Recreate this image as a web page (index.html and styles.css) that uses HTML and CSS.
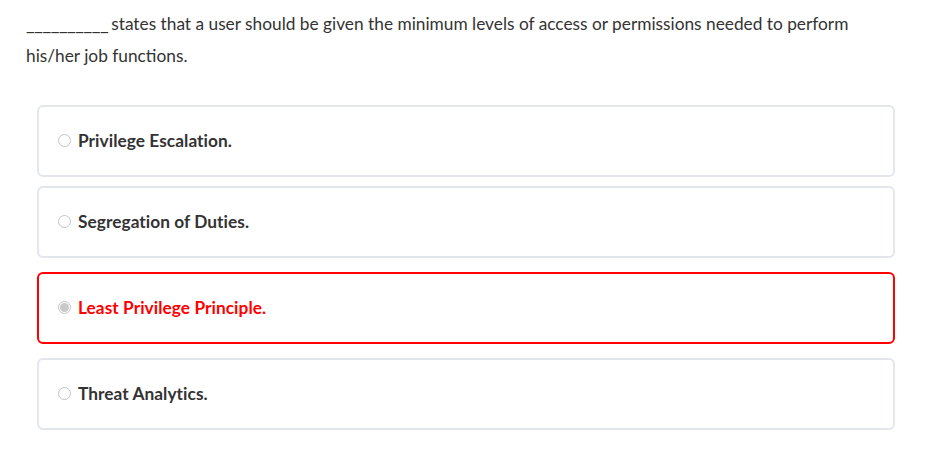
FILE: index.html
```html
<!DOCTYPE html>
<html>
<head>
<meta charset="utf-8">
<link rel="stylesheet" href="styles.css">
</head>
<body>
<div class="question">
  <p class="stem"><span class="blank">__________</span>states that a user should be given the minimum levels of access or permissions needed to perform his/her job functions.</p>
  <div class="options">
    <div class="option opt1"><span class="radio"></span><span class="label">Privilege Escalation.</span></div>
    <div class="option opt2"><span class="radio"></span><span class="label">Segregation of Duties.</span></div>
    <div class="option opt3 selected"><span class="radio checked"></span><span class="label">Least Privilege Principle.</span></div>
    <div class="option opt4"><span class="radio"></span><span class="label">Threat Analytics.</span></div>
  </div>
</div>
</body>
</html>
```
FILE: styles.css
```css
html, body {
  margin: 0;
  padding: 0;
  background: #fff;
}
body {
  padding: 8px 0 0 26px;
  font-family: Lato, "Open Sans", sans-serif;
  color: #333;
}
.question {
  width: 868px;
}
.stem {
  margin: 0;
  font-size: 17.3px;
  line-height: 32px;
  color: #333;
}
.blank {
  font-size: 19px;
  line-height: 1;
  letter-spacing: -0.5px;
  margin-right: 3px;
}
.options {
  display: flex;
  flex-direction: column;
  margin: 33px 0 0 11px;
  width: 858px;
}
.option {
  box-sizing: border-box;
  height: 72px;
  border: 2px solid #e3e6ea;
  border-radius: 6px;
  display: flex;
  align-items: center;
  padding-left: 19px;
  padding-bottom: 2px;
}
.opt2 { margin-top: 9px; }
.opt3 { margin-top: 14px; }
.opt4 { margin-top: 14px; }
.option.selected {
  border-color: #f00;
}
.radio {
  box-sizing: border-box;
  width: 13px;
  height: 13px;
  border: 1px solid #c4c4c4;
  border-radius: 50%;
  background: #fff;
  margin-right: 7px;
  flex: none;
  display: flex;
  align-items: center;
  justify-content: center;
}
.radio.checked::after {
  content: "";
  width: 9px;
  height: 9px;
  border-radius: 50%;
  background: #c9c9c9;
}
.label {
  font-size: 17.3px;
  font-weight: 700;
  color: #333;
  letter-spacing: 0.05px;
}
.selected .label {
  color: #f00;
}
```
